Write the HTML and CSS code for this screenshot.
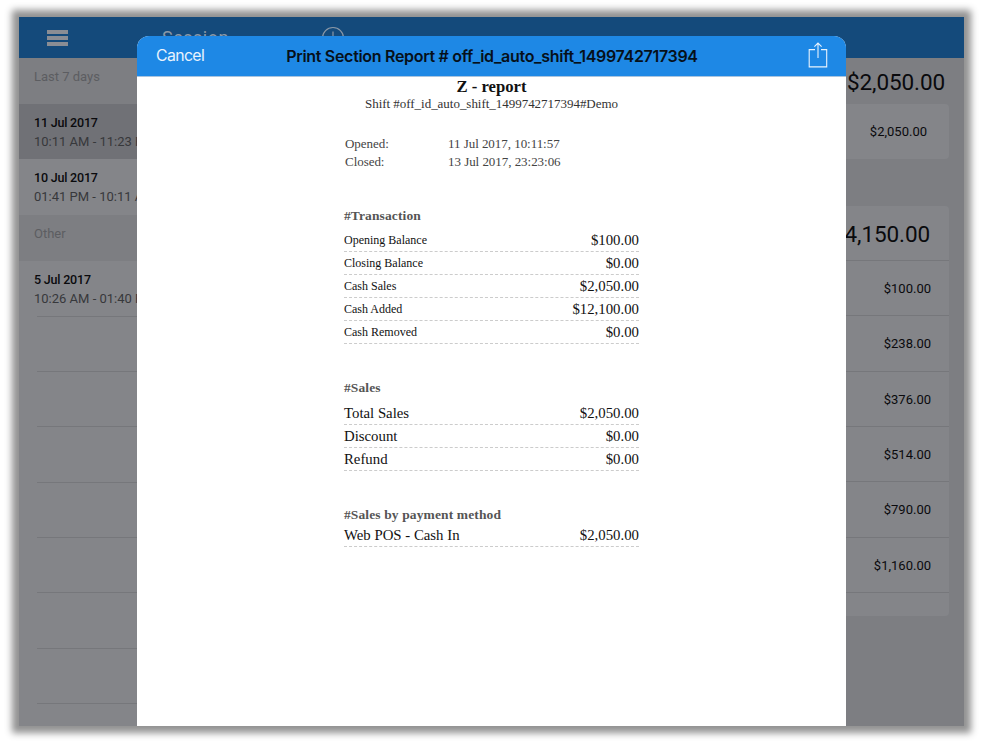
FILE: index.html
```html
<!DOCTYPE html>
<html lang="en">
<head>
<meta charset="utf-8">
<title>Print Section Report</title>
<link rel="stylesheet" href="styles.css">
</head>
<body>
<div class="screen">
  <header class="topbar">
    <div class="menu"><i></i><i></i><i></i></div>
    <span class="topbar-title">Session</span>
    <svg class="add" width="24" height="24" viewBox="0 0 24 24" fill="none" stroke="currentColor" stroke-width="1.2"><circle cx="12" cy="12" r="10.5"/><path d="M12 5.5v13M5.5 12h13"/></svg>
  </header>
  <div class="content">
    <aside class="sidebar">
      <h2 class="group">Last 7 days</h2>
      <div class="shift selected"><b>11 Jul 2017</b><span>10:11 AM - 11:23 PM</span></div>
      <div class="shift"><b>10 Jul 2017</b><span>01:41 PM - 10:11 AM</span></div>
      <h2 class="group">Other</h2>
      <div class="shift"><b>5 Jul 2017</b><span>10:26 AM - 01:40 PM</span></div>
      <div class="empty"></div><div class="empty"></div><div class="empty"></div><div class="empty"></div>
      <div class="empty"></div><div class="empty"></div><div class="empty"></div><div class="empty"></div>
    </aside>
    <main class="main">
      <div class="total">$2,050.00</div>
      <div class="card single">$2,050.00</div>
      <div class="card list">
        <div class="amount big">$14,150.00</div>
        <div class="amount">$100.00</div>
        <div class="amount">$238.00</div>
        <div class="amount">$376.00</div>
        <div class="amount">$514.00</div>
        <div class="amount">$790.00</div>
        <div class="amount">$1,160.00</div>
      </div>
    </main>
  </div>

  <section class="modal">
    <header class="modal-head">
      <span class="cancel">Cancel</span>
      <h1 class="modal-title">Print Section Report # off_id_auto_shift_1499742717394</h1>
      <svg class="share" width="20" height="26" viewBox="0 0 20 26" fill="none" stroke="currentColor" stroke-width="1.1"><path d="M7 7.6H1.2V24.9H18.7V7.6H13M10 16V1M6.4 4.6L10 1L13.6 4.6"/></svg>
    </header>
    <div class="report">
      <h2 class="report-title">Z - report</h2>
      <p class="report-sub">Shift #off_id_auto_shift_1499742717394#Demo</p>
      <dl class="times">
        <dt>Opened:</dt><dd>11 Jul 2017, 10:11:57</dd>
        <dt>Closed:</dt><dd>13 Jul 2017, 23:23:06</dd>
      </dl>
      <h3 class="heading">#Transaction</h3>
      <div class="lines small">
        <div class="line"><span>Opening Balance</span><span class="value">$100.00</span></div>
        <div class="line"><span>Closing Balance</span><span class="value">$0.00</span></div>
        <div class="line"><span>Cash Sales</span><span class="value">$2,050.00</span></div>
        <div class="line"><span>Cash Added</span><span class="value">$12,100.00</span></div>
        <div class="line"><span>Cash Removed</span><span class="value">$0.00</span></div>
      </div>
      <h3 class="heading">#Sales</h3>
      <div class="lines">
        <div class="line"><span>Total Sales</span><span class="value">$2,050.00</span></div>
        <div class="line"><span>Discount</span><span class="value">$0.00</span></div>
        <div class="line"><span>Refund</span><span class="value">$0.00</span></div>
      </div>
      <h3 class="heading tight">#Sales by payment method</h3>
      <div class="lines">
        <div class="line"><span>Web POS - Cash In</span><span class="value">$2,050.00</span></div>
      </div>
    </div>
  </section>
</div>
</body>
</html>
```

FILE: styles.css
```css
* { box-sizing: border-box; }
body { margin: 0; padding: 17px 19px; height: 743px; overflow: hidden; background: #fff; }
h1, h2, h3, p, dl, dd { margin: 0; }

.screen {
  position: relative;
  width: 945px;
  height: 709px;
  background: #7d7e82;
  font-family: Roboto, sans-serif;
  box-shadow: 0 0 7px 7px #929292;
}

.topbar {
  display: flex;
  align-items: center;
  height: 41px;
  padding-left: 28px;
  background: #144a7b;
  color: #8b98a7;
}
.menu { display: flex; flex-direction: column; gap: 2px; width: 21px; }
.menu i { height: 4px; background: #8a8d94; }
.topbar-title { margin-left: 94px; width: 66px; font-size: 18px; letter-spacing: 0.5px; line-height: 41px; }
.add { margin-left: 93px; margin-top: 1px; }

.content { display: flex; height: 668px; overflow: hidden; }
.sidebar { width: 310px; background: #848589; overflow: hidden; }
.group {
  height: 46px;
  padding: 11px 15px;
  font-size: 13px;
  line-height: 16px;
  font-weight: 400;
  color: #5c5d61;
  background: #7d7e82;
}
.shift { display: flex; flex-direction: column; height: 55.3px; padding: 9px 15px 0; white-space: nowrap; }
.shift b { font-size: 12.5px; line-height: 19px; font-weight: 500; letter-spacing: -0.2px; color: #0a0a0d; }
.shift span { font-size: 13px; line-height: 19px; color: #37383b; }
.shift.selected { background: #707176; }
.empty { height: 55.3px; margin-left: 18px; border-top: 1px solid #76777b; }

.main { flex: 1; padding-right: 15px; color: #0a0a0d; text-align: right; }
.total { height: 46px; padding-right: 4px; font-size: 22.5px; line-height: 48px; letter-spacing: -0.1px; }
.card { background: #848589; border-radius: 4px; }
.single { height: 55px; padding-right: 22px; font-size: 13px; line-height: 56px; }
.list { height: 410px; margin-top: 47px; }
.amount { height: 55.35px; padding-right: 18px; border-bottom: 1px solid #76777b; font-size: 13px; line-height: 56px; }
.amount.big { height: 55px; font-size: 22.5px; line-height: 56px; padding-right: 19px; letter-spacing: -0.1px; }

.modal {
  position: absolute;
  left: 118px;
  top: 18.5px;
  width: 709px;
  height: 690.5px;
  background: #fff;
  border-radius: 12px 12px 0 0;
  overflow: hidden;
}
.modal-head {
  display: flex;
  align-items: center;
  justify-content: space-between;
  height: 41px;
  padding: 0 18px 0 19px;
  background: #1e88e5;
  border-bottom: 1px solid #a9c4df;
  color: #e9f3fd;
}
.cancel { width: 60px; font: 400 15.8px Inter, sans-serif; letter-spacing: -0.6px; }
.modal-title { font: 600 16px Inter, sans-serif; letter-spacing: -0.31px; color: #06101a; white-space: nowrap; }
.share { flex: none; margin-left: 40px; margin-top: -1px; }

.report { width: 295px; margin: 0 0 0 207px; font-family: "Liberation Serif", serif; color: #111; }
.report-title { font-size: 16.7px; line-height: 19px; text-align: center; }
.report-sub { font-size: 13px; line-height: 16px; letter-spacing: -0.03px; text-align: center; color: #333; white-space: nowrap; }
.times { display: grid; grid-template-columns: 103px 1fr; margin: 23px 0 34px; padding-left: 1px; font-size: 13px; line-height: 18.5px; letter-spacing: -0.04px; color: #444; }
.heading { height: 23px; font-size: 13.5px; line-height: 20px; letter-spacing: 0.12px; color: #555; }
.heading.tight { height: 18.5px; }
.lines { margin-bottom: 34.5px; font-size: 14.8px; }
.line { display: flex; align-items: center; justify-content: space-between; height: 23.1px; border-bottom: 1px dashed #ccc; line-height: 22px; }
.small { font-size: 12px; }
.value { font-size: 14.8px; }
```
